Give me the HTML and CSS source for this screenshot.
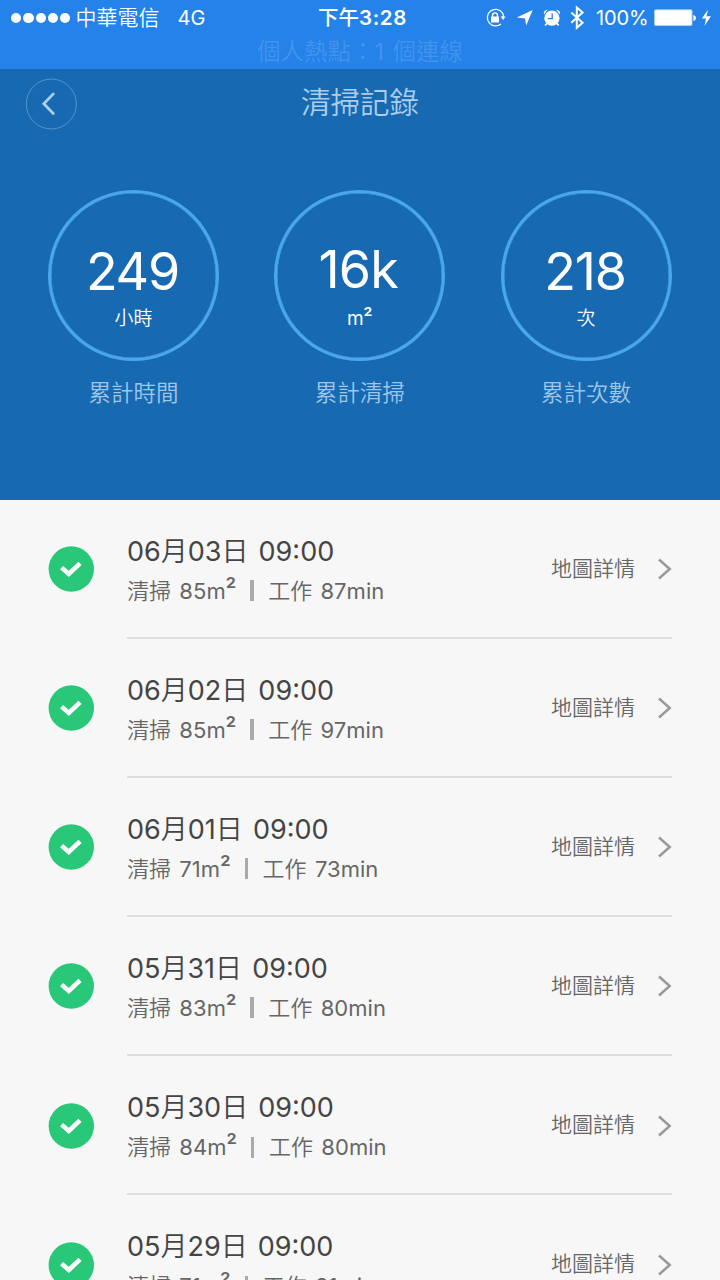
FILE: index.html
```html
<!DOCTYPE html>
<html lang="zh-Hant">
<head>
<meta charset="utf-8">
<title>清掃記錄</title>
<link rel="stylesheet" href="styles.css">
</head>
<body>
<svg class="defs" aria-hidden="true">
  <symbol id="check" viewBox="0 0 46 46"><circle cx="23.3" cy="23" r="22.7" fill="#28c878"/><path d="M13.6 21.6 20.8 28 32 17.4" fill="none" stroke="#fff" stroke-width="4.6"/></symbol>
  <symbol id="next" viewBox="0 0 14 22"><path d="M1 1.5 11.7 11 1 20.5" fill="none" stroke="#999" stroke-width="2.5"/></symbol>
</svg>
<div class="screen">
  <header class="status">
    <div class="status-left">
      <span class="dots"><i></i><i></i><i></i><i></i><i></i></span>
      <span class="carrier">中華電信</span><span class="network">4G</span>
    </div>
    <div class="clock">下午<span class="clock-num">3:28</span></div>
    <svg class="status-icons" viewBox="0 0 120 36" fill="#fff">
      <path d="M22.3 12.7A8.3 8.3 0 1 0 21 24M22.3 12.7Q23.6 14.5 23.3 17.5" fill="none" stroke="#fff" stroke-width="1.3"/>
      <path d="M20.6 16.5H25.6L23.1 20Z"/><rect x="11" y="16.5" width="8" height="6" rx=".6"/><path d="M12.5 17v-1.6a2.5 2.5 0 0 1 5 0V17" fill="none" stroke="#fff" stroke-width="1.4"/>
      <path d="M52.7 10 46.2 25.5 45 18.6 36.8 17.5Z"/>
      <circle cx="71.9" cy="18.2" r="7.6"/><path d="M64 14.6q-1.2-4 3.8-5ZM79.8 14.6q1.2-4-3.8-5Z"/><path d="m67.2 23-2 2.5m11.4-2.5 2 2.5" stroke="#fff" stroke-width="1.8"/><path d="M72.2 13.5V18.7H67.7" fill="none" stroke="#2482e8" stroke-width="1.3"/>
      <path d="m91.3 12.4 11.3 10.4-5.8 5V7.5l5.8 5-11.3 10.3" fill="none" stroke="#fff" stroke-width="2"/>
    </svg>
    <span class="percent">100%</span>
    <svg class="battery" viewBox="0 0 66 36" fill="#fff">
      <rect x="1" y="9.3" width="38.5" height="16.7" rx="2" fill="#a9d1fa"/><rect x="2" y="10.3" width="36.5" height="14.7" rx="1"/>
      <path d="M40.4 15q2.6.5 2.6 3t-2.6 3Z"/><path d="M55 9.7 48.8 18.5h4.2L51.5 26l6.4-9.8h-4.4Z"/>
    </svg>
    <div class="hotspot">個人熱點：1 個連線</div>
  </header>
  <section class="summary">
    <nav class="bar">
      <svg class="back" viewBox="0 0 52 52" fill="none"><circle cx="26.3" cy="26" r="25" stroke="#5496cf" stroke-width="1"/><path d="M28.3 15.9 18.8 25.7 28.3 35.5" stroke="#abcdee" stroke-width="2.8" stroke-linecap="round"/></svg>
      <h1 class="title">清掃記錄</h1>
    </nav>
    <div class="stats">
      <div class="stat"><div class="ring"><b class="value">249</b><span class="unit">小時</span></div><p class="caption">累計時間</p></div>
      <div class="stat"><div class="ring ring-area"><b class="value">16k</b><span class="unit">m<span class="sq">²</span></span></div><p class="caption">累計清掃</p></div>
      <div class="stat"><div class="ring"><b class="value">218</b><span class="unit">次</span></div><p class="caption">累計次數</p></div>
    </div>
  </section>
  <main class="list">
    <article class="row"><svg class="check"><use href="#check"/></svg><div class="body"><div class="info"><h2 class="date">06月03日 09:00</h2><p class="detail"><span>清掃 85m<span class="sq">²</span></span><i class="bar-sep"></i><span>工作 87min</span></p></div><span class="map">地圖詳情</span><svg class="next"><use href="#next"/></svg></div></article>
    <article class="row"><svg class="check"><use href="#check"/></svg><div class="body"><div class="info"><h2 class="date">06月02日 09:00</h2><p class="detail"><span>清掃 85m<span class="sq">²</span></span><i class="bar-sep"></i><span>工作 97min</span></p></div><span class="map">地圖詳情</span><svg class="next"><use href="#next"/></svg></div></article>
    <article class="row"><svg class="check"><use href="#check"/></svg><div class="body"><div class="info"><h2 class="date">06月01日 09:00</h2><p class="detail"><span>清掃 71m<span class="sq">²</span></span><i class="bar-sep"></i><span>工作 73min</span></p></div><span class="map">地圖詳情</span><svg class="next"><use href="#next"/></svg></div></article>
    <article class="row"><svg class="check"><use href="#check"/></svg><div class="body"><div class="info"><h2 class="date">05月31日 09:00</h2><p class="detail"><span>清掃 83m<span class="sq">²</span></span><i class="bar-sep"></i><span>工作 80min</span></p></div><span class="map">地圖詳情</span><svg class="next"><use href="#next"/></svg></div></article>
    <article class="row"><svg class="check"><use href="#check"/></svg><div class="body"><div class="info"><h2 class="date">05月30日 09:00</h2><p class="detail"><span>清掃 84m<span class="sq">²</span></span><i class="bar-sep"></i><span>工作 80min</span></p></div><span class="map">地圖詳情</span><svg class="next"><use href="#next"/></svg></div></article>
    <article class="row"><svg class="check"><use href="#check"/></svg><div class="body"><div class="info"><h2 class="date">05月29日 09:00</h2><p class="detail"><span>清掃 71m<span class="sq">²</span></span><i class="bar-sep"></i><span>工作 81min</span></p></div><span class="map">地圖詳情</span><svg class="next"><use href="#next"/></svg></div></article>
  </main>
</div>
</body>
</html>
```
FILE: styles.css
```css
* { box-sizing: border-box; }
body, h1, h2, p { margin: 0; font-weight: 400; }
body { font-family: Inter, "Noto Sans CJK TC DemiLight", "Noto Sans CJK TC", sans-serif; background: #f7f7f7; }
.defs { position: absolute; width: 0; height: 0; }
.screen { width: 720px; height: 1280px; overflow: hidden; }

.status { display: grid; grid-template-columns: 300px 134px 42px 120px 57px 1fr; grid-template-rows: 36px 33px; height: 69px; background: #2482e8; color: #fff; font-size: 20px; line-height: 36px; }
.status-left { display: flex; align-items: center; padding-left: 11px; grid-column: 1; }
.dots { display: flex; gap: 2px; margin-right: 5px; }
.dots i { width: 10.3px; height: 10.3px; border-radius: 50%; background: #fff; }
.carrier { font-size: 21px; width: 102px; }
.clock { grid-column: 2; padding-left: 18px; font-family: Inter, "Noto Sans CJK TC", sans-serif; font-size: 20.5px; font-weight: 500; white-space: nowrap; }
.clock-num { font-weight: 600; letter-spacing: .6px; }
.status-icons { grid-column: 4; width: 120px; height: 36px; margin-left: 3.5px; }
.percent { grid-column: 5; letter-spacing: -.1px; }
.battery { grid-column: 6; width: 66px; height: 36px; }
.status-left, .clock, .status-icons, .percent, .battery { grid-row: 1; }
.hotspot { grid-row: 2; grid-column: 1 / -1; text-align: center; font-size: 23.5px; line-height: 31px; color: #4294ef; word-spacing: 2px; }

.summary { height: 430.5px; background: #1769b1; }
.bar { display: grid; grid-template-columns: 100px 520px 100px; height: 120.5px; }
.back { width: 52px; height: 52px; margin: 8.5px 0 0 25px; }
.title { font-size: 29.5px; line-height: 67px; text-align: center; color: #abcdee; font-weight: 350; }
.stats { display: flex; justify-content: space-between; padding: 0 48.5px 0 48px; }
.stat { width: 171px; text-align: center; }
.ring { display: flex; flex-direction: column; align-items: center; height: 171px; border: 3.5px solid #4aa8e9; border-radius: 50%; padding-top: 49px; color: #fff; box-shadow: inset 0 0 0 .5px #4aa8e9; }
.value { font-size: 52px; line-height: 60px; font-weight: 400; letter-spacing: -1.2px; text-indent: -2px; }
.unit { font-size: 19px; line-height: 32px; height: 32px; margin-top: 1px; }
.sq { font-family: Roboto, sans-serif; font-size: 1.28em; line-height: 0; vertical-align: .06em; }
.ring-area { padding-top: 47px; }
.ring-area .unit { margin-top: 3px; }
.ring-area .value { text-indent: -3px; letter-spacing: -.8px; }
.caption { font-size: 22.5px; line-height: 32px; margin-top: 16px; color: #9fc5ea; white-space: nowrap; font-weight: 350; }

.list { background: #f7f7f7; }
.row { display: flex; height: 139.15px; padding: 0 48px; }
.check { width: 46px; height: 46px; margin: 46.5px 33px 0 0; flex: none; }
.body { display: flex; flex: 1; border-bottom: 2px solid #dedede; }
.info { flex: 1; padding-top: 34px; white-space: nowrap; }
.date { font-size: 27px; line-height: 36px; color: #444; word-spacing: 2.5px; }
.detail { display: flex; align-items: center; font-size: 22px; line-height: 34px; margin-top: 4px; color: #666; word-spacing: 2px; letter-spacing: .05px; }
.bar-sep { width: 3.5px; height: 21px; margin: 0 14.5px 0 14px; background: #aaa; }
.map { font-size: 21px; line-height: 36px; padding-top: 51px; color: #666; }
.next { width: 14px; height: 22px; margin: 58.5px 0 0 23px; }
```
